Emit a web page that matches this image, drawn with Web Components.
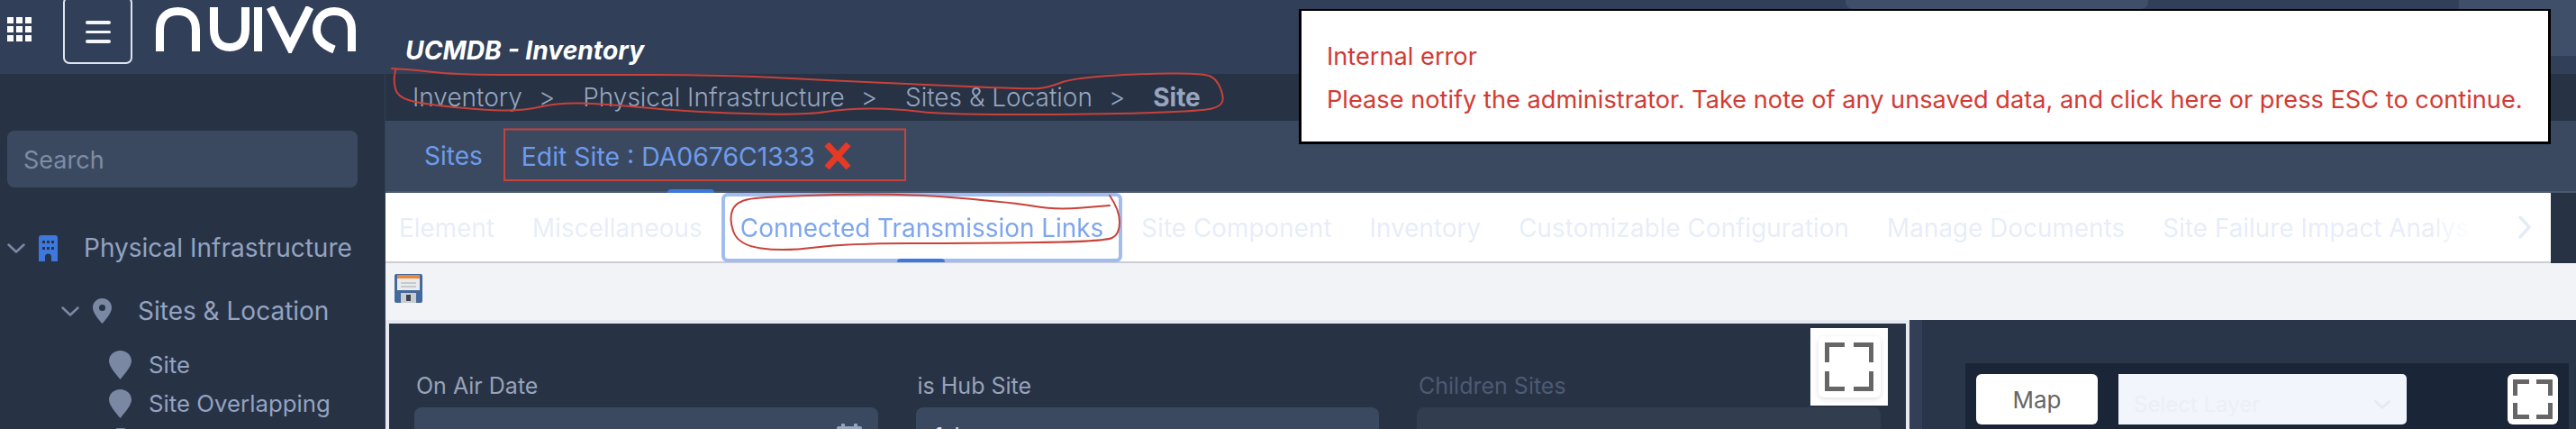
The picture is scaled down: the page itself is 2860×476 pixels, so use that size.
<!DOCTYPE html>
<html lang="en"><head><meta charset="utf-8"><title>UCMDB - Inventory</title>
<style>
html,body{margin:0;padding:0;background:#273245;overflow:hidden;width:2860px;height:476px}
body{font-family:Inter,"Liberation Sans",sans-serif}
</style></head><body>
<app-shell>
  <app-header slot="header" title-text="UCMDB - Inventory"></app-header>
  <side-nav slot="nav">
    <tree-item level="1" icon="building" open>Physical Infrastructure</tree-item>
    <tree-item level="2" icon="pin" open>Sites &amp; Location</tree-item>
    <tree-item level="3" icon="drop">Site</tree-item>
    <tree-item level="3" icon="drop">Site Overlapping</tree-item>
    <tree-item level="3" icon="dot"></tree-item>
  </side-nav>
  <bread-crumbs slot="main"><span>Inventory</span><span>Physical Infrastructure</span><span>Sites &amp; Location</span><b>Site</b></bread-crumbs>
  <page-tabs slot="main"></page-tabs>
  <detail-tabs slot="main"></detail-tabs>
  <tool-bar slot="main"></tool-bar>
  <work-area slot="main">
    <form-panel slot="left">
      <form-field label="On Air Date" calendar></form-field>
      <form-field label="is Hub Site" value="false"></form-field>
      <form-field label="Children Sites" disabled></form-field>
    </form-panel>
    <map-panel slot="right"></map-panel>
  </work-area>
  <error-dialog slot="overlay"></error-dialog>
  <mark-up slot="overlay"></mark-up>
</app-shell>
<script>
const def=(name,html,extra={})=>customElements.define(name,class extends HTMLElement{
  constructor(){super();this.attachShadow({mode:'open'}).innerHTML=typeof html==='function'?html(this):html;}
  connectedCallback(){if(extra.ready)extra.ready(this);}
});
const fsIcon=(s,l,w)=>`<svg width="${s}" height="${s}" viewBox="0 0 ${s} ${s}" fill="none" stroke="#666" stroke-width="${w}"><path d="M${w/2} ${l}V${w/2}H${l}M${s-l} ${w/2}H${s-w/2}V${l}M${w/2} ${s-l}V${s-w/2}H${l}M${s-l} ${s-w/2}H${s-w/2}V${s-l}"/></svg>`;

def('app-shell',`<style>
:host{display:grid;position:relative;width:2860px;height:476px;overflow:hidden;grid-template:82px 394px/428px 2432px;grid-template-areas:"h h" "n m";background:#273245}
.h{grid-area:h}.n{grid-area:n}.m{grid-area:m;display:flex;flex-direction:column;min-width:0;min-height:0;overflow:hidden}
</style><div class="h"><slot name="header"></slot></div><div class="n"><slot name="nav"></slot></div><div class="m"><slot name="main"></slot></div><slot name="overlay"></slot>`);

def('app-header',h=>`<style>
:host{display:flex;height:82px;background:#313f59;align-items:flex-start;position:relative;overflow:hidden}
.grid{margin:19px 0 0 8px;display:grid;grid-template-columns:repeat(3,7px);grid-auto-rows:7px;gap:3px;width:27px;flex:none}
.grid i{background:#fff;display:block}
.burger{margin:-4px 0 0 35px;width:77px;height:75px;box-sizing:border-box;border:2px solid #dfe5f0;border-radius:7px;display:flex;flex-direction:column;align-items:center;justify-content:center;gap:7px;padding-top:4px;flex:none}
.burger i{display:block;width:28px;height:3.5px;border-radius:2px;background:#f3f5f9}
svg.logo{margin:7px 0 0 26px;flex:none}
h1{margin:38px 0 0 53px;font:italic 700 28.2px/36px Inter,sans-serif;color:#fff;flex:1}
.pill{flex:none;background:#3f4e69;border-radius:0 0 8px 8px}
.a{margin-right:345px;width:336px;height:10px}
.b{width:130px;height:62px;border-radius:0 0 0 6px}
</style>
<div class="grid">${'<i></i>'.repeat(9)}</div>
<div class="burger"><i></i><i></i><i></i></div>
<svg class="logo" width="224" height="52" viewBox="173 7 224 52" fill="none" stroke="#fff" stroke-width="9"><path d="M177.5 57V33C177.5 19 186 12.5 197.5 12.5S217.5 19 217.5 33V57"/><path d="M237.5 8V32C237.5 46 244 52.5 255 52.5S272.500 46 272.500 32V8"/><path d="M286.500 8V57"/><path d="M300 8L322 52L344 8" stroke-linejoin="miter"/><path d="M371 55C358 50 351.500 42 351.500 33C351.500 20 360 12.500 371 12.500C383 12.500 390.500 20 390.500 33V57"/></svg>
<h1>${h.getAttribute('title-text')}</h1>
<div class="pill a"></div><div class="pill b"></div>`);

def('side-nav',`<style>
:host{display:block;height:394px;box-sizing:border-box;padding:63px 30px 0 8px;background:#273245;border-right:1px solid #323e54;overflow:hidden}
.s{height:63px;border-radius:8px;background:#3b4960;box-sizing:border-box;padding:2px 18px 0;display:flex;align-items:center;font-size:27px;color:#7f8ca3;margin-bottom:32px}
</style><div class="s">Search</div><slot></slot>`);

const ICONS={
 building:`<svg width="21" height="29" viewBox="0 0 21 29"><path fill="#3f78dc" fill-rule="evenodd" d="M3 0H18a3 3 0 0 1 3 3V29H14V24a3.500 3.500 0 0 0-7 0V29H0V3A3 3 0 0 1 3 0Z"/><g fill="#273245"><rect x="4" y="6" width="3" height="3"/><rect x="9" y="6" width="3" height="3"/><rect x="14" y="6" width="3" height="3"/><rect x="4" y="13" width="3" height="3"/><rect x="9" y="13" width="3" height="3"/><rect x="14" y="13" width="3" height="3"/></g></svg>`,
 pin:`<svg width="21" height="28" viewBox="0 0 21 28"><path fill="#7a88a3" fill-rule="evenodd" d="M10.500 0C16.300 0 21 4.500 21 10.200C21 16.500 14 24 10.500 28C7 24 0 16.500 0 10.200C0 4.500 4.700 0 10.500 0ZM10.500 7A3.500 3.500 0 1 0 10.501 14A3.500 3.500 0 0 0 10.500 7Z"/></svg>`,
 drop:`<svg width="25" height="32" viewBox="0 0 25 32"><path fill="#7a88a3" d="M12.500 0C19.400 0 25 5 25 11.500C25 18 16.500 27 12.500 32C8.500 27 0 18 0 11.500C0 5 5.600 0 12.500 0Z"/></svg>`,
 dot:`<svg width="25" height="32" viewBox="0 0 25 32"><circle cx="13" cy="3" r="5.500" fill="#7a88a3"/></svg>`
};
const chev=`<svg width="20" height="11" viewBox="0 0 20 11" fill="none" stroke="#7a88a3" stroke-width="2.500" stroke-linecap="round" stroke-linejoin="round"><path d="M1.500 1.500L10 9.500L18.500 1.500"/></svg>`;
def('tree-item',h=>{
 const l=+h.getAttribute('level');
 const cfg={1:{pad:0,h:70,gap:15,tg:29,fs:28,mb:0},2:{pad:60,h:70,gap:15,tg:29,fs:28,mb:3},3:{pad:113,h:43,gap:0,tg:19,fs:25.8,mb:0}}[l];
 return `<style>:host{display:flex;align-items:center;height:${cfg.h}px;margin-bottom:${cfg.mb}px;padding-left:${cfg.pad}px;color:#93a3c0;font-size:${cfg.fs}px;white-space:nowrap}
 .c{display:flex;margin-right:${cfg.gap}px}.i{display:flex;margin-right:${cfg.tg}px}</style>
 ${h.hasAttribute('open')?`<span class="c">${chev}</span>`:''}<span class="i">${ICONS[h.getAttribute('icon')]}</span><slot></slot>`;
});

def('bread-crumbs',`<style>
:host{display:flex;align-items:center;height:52px;flex:none;background:#273245;padding-left:30px;color:#97a6bf;font-size:28px;font-weight:300;white-space:nowrap;box-sizing:border-box}
</style><slot></slot>`,{ready(h){
  h.querySelectorAll('span').forEach(s=>{s.style.cssText='display:inline-flex;align-items:center';
    if(!s.querySelector('i')){const g=document.createElement('i');g.textContent='>';g.style.cssText='font-style:normal;margin:0 31px 0 18px';s.append(g);}});
  h.querySelector('b').style.fontWeight='700';
}});

def('page-tabs',`<style>
:host{display:flex;align-items:center;height:78px;flex:none;background:#3b4960;border-bottom:2px solid #4a5870;padding-left:43px;font-size:28px;color:#6d9cec;position:relative;white-space:nowrap}
.s{margin-right:43px}.e{display:flex;align-items:center;gap:10px;font-size:28.4px}
.ind{position:absolute;left:313px;bottom:-2px;width:52px;height:4px;border-radius:4px 4px 0 0;background:#3f78dc}
</style><span class="s">Sites</span><span class="e">Edit Site : DA0676C1333<svg width="30" height="30" viewBox="0 0 30 30" stroke="#e53a25" stroke-width="7"><path d="M3 2L27 28M27 2L3 28"/></svg></span><span class="ind"></span>`);

def('detail-tabs',`<style>
:host{display:flex;height:78px;flex:none;background:#273245;font-size:27.9px;white-space:nowrap}
.w{display:flex;width:2404px;height:78px;box-sizing:border-box;background:#fff;border-bottom:2px solid #ccced3}
.l{display:flex;flex:1;min-width:0;height:77px;padding-left:15px;gap:42px;overflow:hidden;align-items:center;color:#e7edf9;box-sizing:border-box;-webkit-mask-image:linear-gradient(to right,#000 calc(100% - 70px),transparent calc(100% - 22px));mask-image:linear-gradient(to right,#000 calc(100% - 70px),transparent calc(100% - 22px))}
.l span{flex:none}
.on{color:#7ea6ee;position:relative;margin:0 -21px;height:77px;display:flex;align-items:center;box-sizing:border-box;border:4px solid #a2bcef;border-radius:7px;padding:0 17px}
.on:after{content:"";position:absolute;left:191px;bottom:-4px;width:53px;height:4px;border-radius:4px 4px 0 0;background:#3f78dc}
.n{flex:none;width:64px;display:flex;align-items:center;justify-content:flex-start;padding-left:27px;box-sizing:border-box}
</style><div class="w"><div class="l"><span>Element</span><span>Miscellaneous</span><span class="on">Connected Transmission Links</span><span>Site Component</span><span>Inventory</span><span>Customizable Configuration</span><span>Manage Documents</span><span>Site Failure Impact Analysis</span></div>
<div class="n"><svg width="16" height="26" viewBox="0 0 16 26" fill="none" stroke="#e4ebf8" stroke-width="3.500" stroke-linecap="round" stroke-linejoin="round"><path d="M3 2L13 13L3 24"/></svg></div></div>`);

def('tool-bar',`<style>:host{display:flex;align-items:center;height:63px;flex:none;background:#f2f3f6;padding:0 0 8px 10px;box-sizing:border-box}</style>
<svg width="31" height="32" viewBox="0 0 31 32"><rect width="31" height="32" rx="2" fill="#44699c"/><rect x="3" y="2" width="25" height="16" fill="#e9ebee"/><rect x="3" y="1" width="25" height="4" fill="#e88a3c"/><rect x="7" y="9" width="17" height="2" fill="#c6c9ce"/><rect x="7" y="13" width="17" height="2" fill="#c6c9ce"/><rect x="7" y="21" width="17" height="11" fill="#c9ccd0"/><rect x="13" y="23" width="5" height="7" fill="#3c4450"/></svg>`);

def('work-area',`<style>:host{display:flex;height:121px;flex:none;background:#e6e9f0}</style><slot name="left"></slot><slot name="right"></slot>`);

def('form-panel',`<style>
:host{display:grid;width:1684px;margin:4px 4px 0 4px;height:117px;box-sizing:border-box;background:#273245;padding:54px 0 0 28px;grid-template-columns:repeat(3,514.5px);column-gap:42px;position:relative;overflow:hidden}
.fs{position:absolute;top:5px;right:20px;width:86px;height:86px;background:#fff;display:flex;align-items:center;justify-content:center}
.in{width:69px;height:68px;border-radius:6px;box-shadow:0 2px 6px rgba(0,0,0,.12);display:flex;align-items:center;justify-content:center}
</style><slot></slot><div class="fs"><div class="in">${fsIcon(54,22,5)}</div></div>`);

def('form-field',h=>{const d=h.hasAttribute('disabled');return `<style>
:host{display:block;font-size:25px}
label{display:block;line-height:30px;margin:0 0 9px 2px;color:${d?'#4d5a72':'#97a3b8'}}
.b{height:63px;border-radius:8px;background:${d?'#323d50':'#3b4960'};display:flex;align-items:center;justify-content:space-between;padding:0 18px 0 20px;color:#dfe5f0;box-sizing:border-box}
</style><label>${h.getAttribute('label')}</label><div class="b"><span>${h.getAttribute('value')||''}</span>${h.hasAttribute('calendar')?`<svg width="28" height="28" viewBox="0 0 28 28" fill="#97a6bf"><path d="M2 3H26a2 2 0 0 1 2 2V28H0V5A2 2 0 0 1 2 3Z"/><rect x="5" y="0" width="4" height="6" rx="1"/><rect x="19" y="0" width="4" height="6" rx="1"/></svg>`:''}</div>`});

def('map-panel',`<style>
:host{display:flex;flex:1;min-width:0;height:121px;background:#293548;border-left:14px solid #323f56;box-sizing:border-box;padding:48px 8px 0 48px}
.bar{flex:1;background:#1a2538;padding:12px;display:flex;gap:23px;align-items:flex-start;height:73px;box-sizing:border-box}
.m{width:135px;height:56px;background:#fff;border-radius:6px;color:#666;font-size:26px;display:flex;align-items:center;justify-content:center;flex:none}
.sel{width:320px;height:56px;background:#f2f5fc;border-radius:0 5px 5px 0;color:#ebeff8;font-size:24px;display:flex;align-items:center;justify-content:space-between;box-sizing:border-box;padding:10px 17px 0 17px;flex:none}
.fs{margin-left:auto;width:56px;height:56px;background:#fff;border-radius:6px;display:flex;align-items:center;justify-content:center;flex:none}
</style><div class="bar"><div class="m">Map</div><div class="sel"><span>Select Layer</span><svg width="20" height="11" viewBox="0 0 20 11" fill="none" stroke="#e4e9f5" stroke-width="2.500"><path d="M1.500 1.500L10 9.500L18.500 1.500"/></svg></div><div class="fs">${fsIcon(44,18,5)}</div></div>`);

def('error-dialog',`<style>
:host{position:absolute;left:1442px;top:10px;width:1390px;height:150px;box-sizing:border-box;background:#fff;border:3px solid #000;border-top-width:2px;padding:34px 0 0 28px;color:#d13b33;font-size:27.2px;line-height:34px;white-space:nowrap}
p{margin:0 0 14px}
</style><p>Internal error</p><p>Please notify the administrator. Take note of any unsaved data, and click here or press ESC to continue.</p>`);

const smooth=p=>{let d=`M${p[0]} ${p[1]}`;for(let i=2;i<p.length-2;i+=2){const mx=(p[i]+p[i+2])/2,my=(p[i+1]+p[i+3])/2;d+=`Q${p[i]} ${p[i+1]} ${mx} ${my}`;}return d+`L${p[p.length-2]} ${p[p.length-1]}`;};
const bc=[435,76,458,77,504,83,650,83,803,83,915,89,1030,94,1144,99,1164,97,1190,87,1259,82,1336,81,1351,88,1359,108,1355,118,1336,123,1221,127,1045,127,999,121,942,120,892,128,764,124,669,115,619,114,581,123,535,122,466,115,441,107,437,90,439,78];
const tb=[1232,217,1243,233,1243,260,1226,268,1078,270,941,270,870,279,820,272,809,243,818,222,859,218,996,214,1128,225,1171,233,1232,228];
def('mark-up',`<style>:host{position:absolute;left:0;top:0;width:2860px;height:476px;pointer-events:none}svg{display:block}</style>
<svg width="2860" height="476" fill="none" stroke="#c8423a" stroke-width="2" stroke-linejoin="round" stroke-linecap="round"><path d="${smooth(bc)}"/><path d="${smooth(tb)}"/><rect x="560" y="143.500" width="445" height="56.500" stroke-linejoin="miter"/></svg>`);
</script>
</body></html>
